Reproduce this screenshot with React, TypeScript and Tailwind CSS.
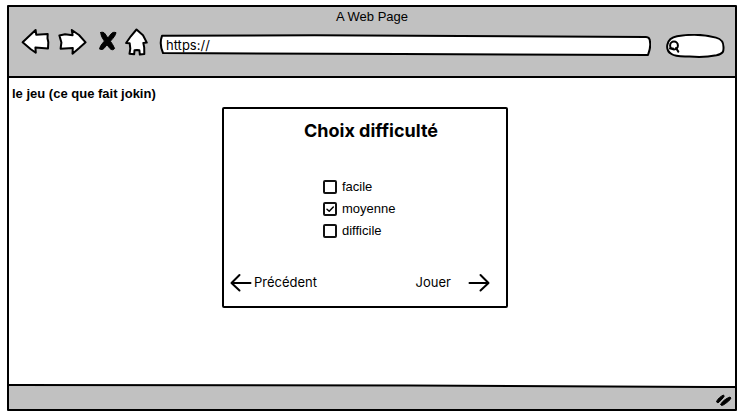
import { useState } from "react";
import type { ReactNode } from "react";

type IconProps = { className?: string; children: ReactNode; viewBox: string };

function Sketch({ className, children, viewBox }: IconProps) {
  return (
    <svg
      className={className}
      viewBox={viewBox}
      fill="none"
      stroke="#000"
      strokeWidth="2"
      strokeLinecap="round"
      strokeLinejoin="round"
      aria-hidden="true"
    >
      {children}
    </svg>
  );
}

const levels = ["facile", "moyenne", "difficile"];

function BrowserBar() {
  return (
    <header className="flex flex-col border-b-2 border-black bg-[#c1c1c1] pt-px pb-4.5">
      <h1 className="text-center text-[13px] leading-[18px]">A Web Page</h1>
      <div className="flex items-center pr-2.5 pl-3">
        <button type="button" aria-label="Retour" className="mr-2">
          <Sketch className="h-[30px] w-[29px]" viewBox="0 0 29 30">
            <path fill="#fff" d="M1.6 15.3 14.6 3l.6 4.700 11.500-.7-.2 4.300.8 4-.3 6.200-12.600-1 .4 5.200-5.300-3.700z" />
          </Sketch>
        </button>
        <button type="button" aria-label="Suivant" className="mr-3">
          <Sketch className="h-[30px] w-[29px]" viewBox="0 0 29 30">
            <path fill="#fff" d="M1.400 8.400 7 7.200l7.600 1L13.800 3l7.200 5 6.600 7.300-6.400 5.700-6.700 5.700.3-5.700-12.200.7.800-6.200z" />
          </Sketch>
        </button>
        <button type="button" aria-label="Arrêter" className="mr-2">
          <Sketch className="h-[30px] w-[18px]" viewBox="0 0 18 30">
            <path
              fill="#000"
              strokeWidth="1"
              d="M1.800 5.500c1.500-.8 3.200-.3 4.400 1.500l2.600 4 3.400-4.200c1.500-1.700 3-1.700 4.800-1.200-.3 2.500-2.300 5-5.600 8.600 1.400 2.400 3.300 4.400 4.200 7.300-1.200 1.800-3.200 1.500-4.600.1l-3-3.800-3 3.600c-1.200 1.200-2.700 1.400-4.400.7.300-3 2.300-5 4.800-8C3.700 11.400 1.600 8.800 1.800 5.500z"
            />
          </Sketch>
        </button>
        <button type="button" aria-label="Accueil" className="mr-2.5">
          <Sketch className="h-[30px] w-6" viewBox="0 0 24 30">
            <path fill="#fff" d="M11.500 2.500 18 8.300l3.800 7.300-3.500.3.900 4.500.1 6.500-4.500.6-.4-4.200-2.400-.3-2.500.2-.3 4-4.700-.4.800-5.200-.6-5.300-3.600-.3 4.700-6.700z" />
          </Sketch>
        </button>
        <label className="relative mt-1.5 flex h-[22px] flex-1 items-center">
          <svg
            className="absolute inset-0 size-full"
            viewBox="0 0 490 22"
            preserveAspectRatio="none"
            fill="#fff"
            stroke="#000"
            strokeWidth="2"
            strokeLinejoin="round"
            aria-hidden="true"
          >
            <path d="M3 1.800 155 1.300l330 1.700q4 0 4 5 1 5-2 13L240 20 4 19Q0 10 3 1.800z" />
          </svg>
          <input
            aria-label="Adresse"
            defaultValue="https://"
            className="relative w-full bg-transparent px-[7px] font-['Inter',sans-serif] text-[13px] leading-[18px] outline-none"
          />
        </label>
        <label className="relative mt-2 ml-3.5 flex h-6 w-[60px] items-center">
          <svg className="absolute inset-0 size-full" viewBox="0 0 60 24" stroke="#000" strokeWidth="2" fill="#fff" aria-hidden="true">
            <path d="M12 2.300C24 .3 40 .6 51 3.600c6 1.700 7.500 4.600 7.500 9.400.2 4.300.1 6.700-7 8.300-10 2-20 1.900-27 1.200-7-.3-14 .4-18-2.500C-.2 16 .5 4.500 12 2.300z" />
            <circle cx="9" cy="11.500" r="3.900" fill="none" />
            <path d="M5 14.500h3M11 14l2.300 3.600" strokeLinecap="round" />
          </svg>
          <input
            aria-label="Rechercher"
            className="relative w-full bg-transparent pr-2 pl-4 text-[13px] leading-[18px] outline-none"
          />
        </label>
      </div>
    </header>
  );
}

function DifficultyPanel() {
  const [selected, setSelected] = useState("moyenne");
  return (
    <section className="mr-3.5 flex w-[286px] flex-col rounded-xs border-2 border-black bg-white pt-2 pb-3.5">
      <h2 className="pl-3 text-center font-['Inter',sans-serif] text-lg leading-7 font-bold">Choix difficulté</h2>
      <fieldset className="mt-[31px] pl-[99px]">
        {levels.map((level) => (
          <label key={level} className="flex h-[22px] items-center gap-[5px] text-[13px] leading-[18px]">
            <span className="grid size-3.5 place-items-center">
              <input
                type="checkbox"
                checked={selected === level}
                onChange={() => setSelected(level)}
                className="peer col-start-1 row-start-1 size-3.5 appearance-none rounded-xs border-2 border-[#111] bg-white"
              />
              <Sketch
                className="pointer-events-none col-start-1 row-start-1 size-3.5 opacity-0 peer-checked:opacity-100"
                viewBox="0 0 14 14"
              >
                <path strokeWidth="1.5" d="M4 7.300l2.200 2L10.300 5" />
              </Sketch>
            </span>
            {level}
          </label>
        ))}
      </fieldset>
      <div className="mt-[30px] flex items-center justify-between pr-4 pl-1.5 font-['Inter',sans-serif] text-[13px] leading-[18px]">
        <button type="button" className="flex items-center gap-0.5">
          <Sketch className="h-5 w-[22px]" viewBox="0 0 22 20">
            <path d="M20.500 11H2M9.500 3 1.500 11l8 7.500" />
          </Sketch>
          Précédent
        </button>
        <button type="button" className="flex items-center gap-[17px]">
          Jouer
          <Sketch className="h-5 w-[22px]" viewBox="0 0 22 20">
            <path d="M1.500 11H20M12.500 3l8 8-8 7.500" />
          </Sketch>
        </button>
      </div>
    </section>
  );
}

export default function App() {
  return (
    <div className="flex min-h-screen flex-col bg-white pt-[5px] pr-1.5 pb-[5px] pl-[7px] font-['Liberation_Sans',sans-serif] text-black">
      <div className="flex flex-1 flex-col rounded-[1px] border-2 border-black">
        <BrowserBar />
        <main className="flex flex-1 flex-col px-[3px] pt-[7px]">
          <p className="text-[13px] leading-[18px] font-bold">le jeu (ce que fait jokin)</p>
          <div className="mt-1 flex justify-center">
            <DifficultyPanel />
          </div>
        </main>
        <footer className="flex h-[26px] shrink-0">
          <svg className="h-full min-w-0 flex-1" viewBox="0 0 700 26" preserveAspectRatio="none" aria-hidden="true">
            <path fill="#c1c1c1" d="M0 2 700 4V26H0z" />
            <path fill="none" stroke="#000" strokeWidth="2" d="M0 2 400 2.500 700 4" />
          </svg>
          <svg className="h-full w-[26px]" viewBox="0 0 26 26" aria-hidden="true">
            <path fill="#c1c1c1" d="M0 4H26V26H0z" />
            <path fill="none" stroke="#000" strokeWidth="2" d="M0 4h26" />
            <path
              stroke="#000"
              strokeLinejoin="round"
              d="M7.500 18.500c1.500-3 4-5 7-6.500q1.500 1-.3 2.800L10 19.200q-2 1.300-2.500-.7zM11.500 21.500c2-3.500 5.500-6 9.500-7.500q1.700.8.200 2.500c-2 2-4 3.800-7 5.500q-2 1-2.700-.5z"
            />
          </svg>
        </footer>
      </div>
    </div>
  );
}
